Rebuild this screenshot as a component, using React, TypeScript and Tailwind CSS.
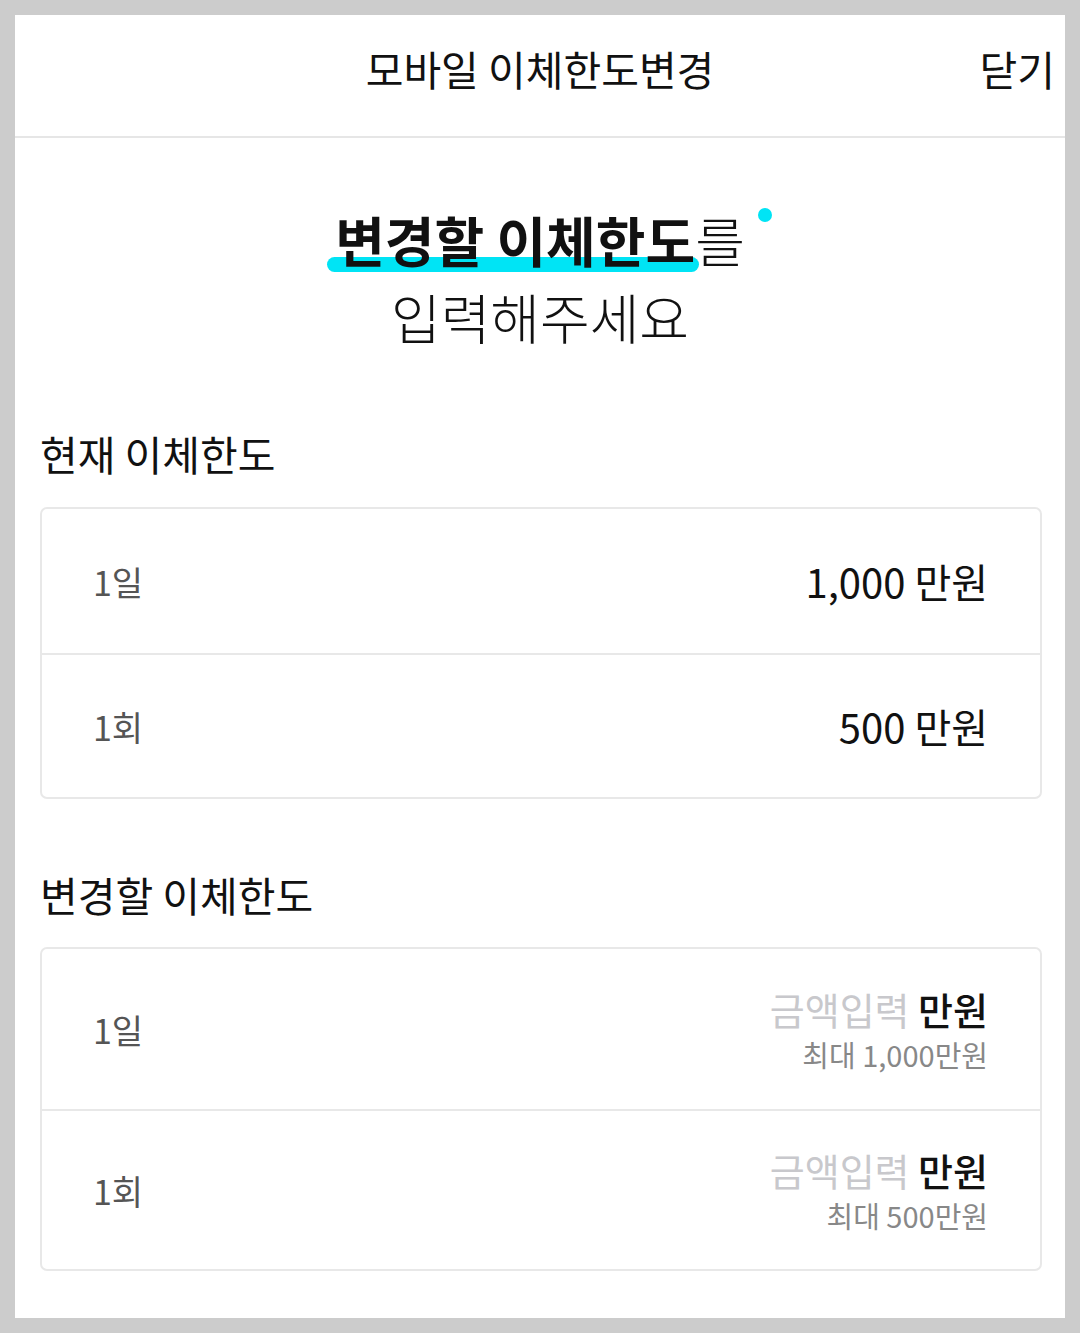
export default function App() {
  const current = [
    { label: '1일', value: '1,000 만원' },
    { label: '1회', value: '500 만원' },
  ]
  const change = [
    { label: '1일', max: '최대 1,000만원' },
    { label: '1회', max: '최대 500만원' },
  ]

  return (
    <div
      className="flex min-h-screen flex-col bg-[#cccccc] p-[15px]"
      style={{ fontFamily: '"Noto Sans CJK KR", "Noto Sans", sans-serif' }}
    >
      <div className="flex flex-1 flex-col bg-white">
        {/* header */}
        <header className="relative flex h-[123px] items-start justify-center border-b-2 border-[#e6e6e6] pt-[25px]">
          <h1 className="text-[41px] leading-[56px] font-normal text-[#111]">모바일 이체한도변경</h1>
          <button className="absolute right-[10px] top-[25px] text-[41px] leading-[56px] text-[#111]">닫기</button>
        </header>

        {/* headline */}
        <div className="flex flex-col items-center pt-[63px] text-[54px] leading-[77px] text-[#111]">
          <div className="relative">
            <span className="relative inline-block">
              <span className="absolute left-[-8px] right-[-4px] top-[56px] h-[15px] rounded-full bg-[#00e4f5]" />
              <span className="relative font-bold">변경할 이체한도</span>
            </span>
            <span className="font-light">를</span>
            <span className="absolute right-[-27px] top-[7px] h-[14px] w-[14px] rounded-full bg-[#00e4f5]" />
          </div>
          <div className="font-light">입력해주세요</div>
        </div>

        <div className="pl-[25px] pr-[23px]">
          {/* current limit */}
          <h2 className="mt-[72px] text-[41px] leading-[52px] font-normal text-[#111]">현재 이체한도</h2>
          <div className="mt-[28px] rounded-[7px] border-2 border-[#e8e8e8]">
            {current.map((row, i) => (
              <div
                key={row.label}
                className={`flex h-[144px] items-center justify-between pl-[51px] pr-[52px] ${i > 0 ? 'border-t-2 border-[#e8e8e8]' : ''}`}
              >
                <span className="text-[34px] text-[#555]">{row.label}</span>
                <span className="text-[40px] text-[#111]">{row.value}</span>
              </div>
            ))}
          </div>

          {/* new limit */}
          <h2 className="mt-[69px] text-[41px] leading-[52px] font-normal text-[#111]">변경할 이체한도</h2>
          <div className="mt-[27px] rounded-[7px] border-2 border-[#e8e8e8]">
            {change.map((row, i) => (
              <div
                key={row.label}
                className={`flex h-[160px] items-center justify-between pl-[51px] pr-[52px] ${i > 0 ? 'border-t-2 border-[#e8e8e8]' : ''}`}
              >
                <span className="text-[34px] text-[#555]">{row.label}</span>
                <div className="flex flex-col items-end">
                  <div className="text-[38px] leading-[50px]">
                    <span className="text-[#c8c8cc]">금액입력</span>{' '}
                    <span className="font-medium text-[#111]">만원</span>
                  </div>
                  <div className="text-[29px] leading-[40px] text-[#888]">{row.max}</div>
                </div>
              </div>
            ))}
          </div>
        </div>
      </div>
    </div>
  )
}
